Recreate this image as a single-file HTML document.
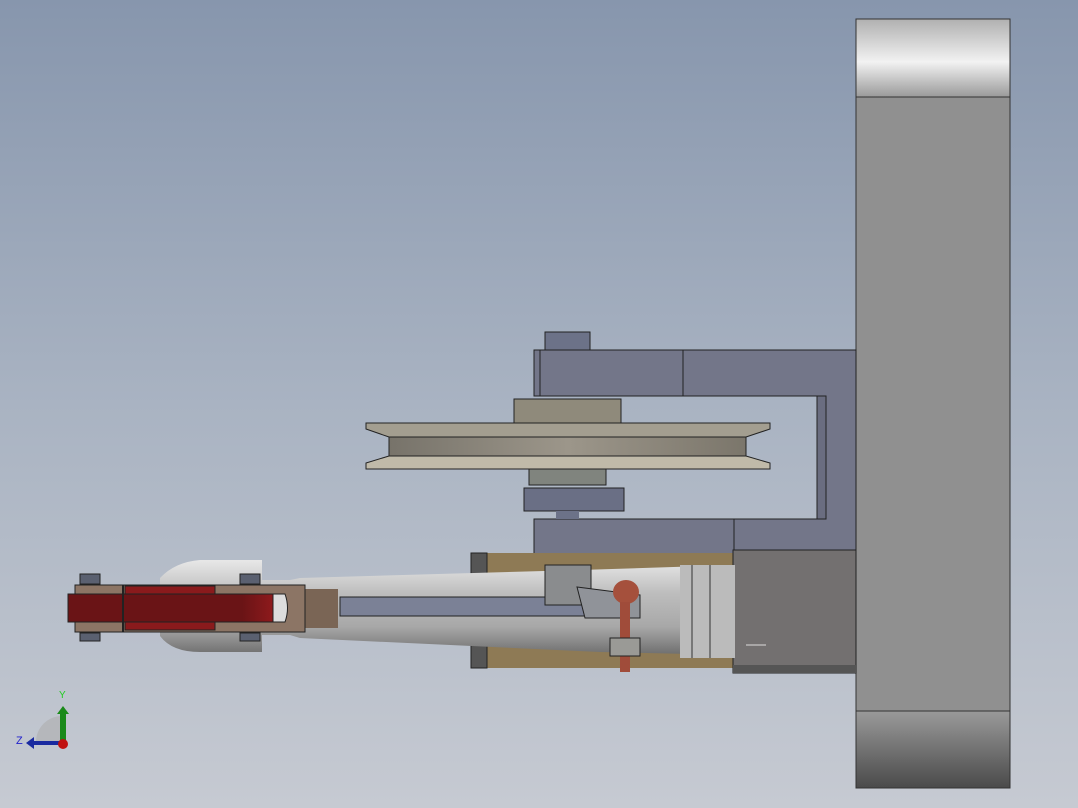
<!DOCTYPE html>
<html><head><style>
html,body{margin:0;padding:0}
body{width:1078px;height:808px;overflow:hidden;background:linear-gradient(#8796ad 0%,#a9b3c2 50%,#c6cad2 100%);font-family:"Liberation Sans",sans-serif}
svg{position:absolute;left:0;top:0}
</style></head><body>
<svg width="1078" height="808" viewBox="0 0 1078 808">
<defs>
<linearGradient id="cap1" x1="0" y1="0" x2="0" y2="1"><stop offset="0" stop-color="#b0b0b0"/><stop offset=".55" stop-color="#f2f2f2"/><stop offset="1" stop-color="#9a9a9a"/></linearGradient>
<linearGradient id="cap2" x1="0" y1="0" x2="0" y2="1"><stop offset="0" stop-color="#9a9a9a"/><stop offset="1" stop-color="#4a4a4a"/></linearGradient>
<linearGradient id="cyl" x1="0" y1="0" x2="0" y2="1"><stop offset="0" stop-color="#e8e8e8"/><stop offset=".35" stop-color="#bdbdbd"/><stop offset=".7" stop-color="#a8a8a8"/><stop offset="1" stop-color="#6e6e6e"/></linearGradient>
<linearGradient id="pul" x1="0" y1="0" x2="1" y2="0"><stop offset="0" stop-color="#77736a"/><stop offset=".5" stop-color="#9c968a"/><stop offset="1" stop-color="#7b766b"/></linearGradient>
<linearGradient id="red" x1="0" y1="0" x2="1" y2="0"><stop offset="0" stop-color="#6a1416"/><stop offset=".85" stop-color="#6a1416"/><stop offset="1" stop-color="#8e1a1c"/></linearGradient>
</defs>
<!-- right column -->
<rect x="856" y="19" width="154" height="78" fill="url(#cap1)" stroke="#333" stroke-width="1"/>
<rect x="856" y="97" width="154" height="614" fill="#909090" stroke="#333"/>
<rect x="856" y="711" width="154" height="77" fill="url(#cap2)" stroke="#333"/>
<!-- bracket -->
<rect x="545" y="332" width="45" height="18" fill="#6c7288" stroke="#222"/>
<path d="M534 350H856V550H534V519H817V396H534Z" fill="#737689" stroke="#222"/>
<rect x="817" y="396" width="9" height="123" fill="#6a6d80" stroke="#222"/>
<line x1="540" y1="350" x2="540" y2="396" stroke="#222"/><line x1="540" y1="519" x2="540" y2="565" stroke="#222"/>
<line x1="683" y1="350" x2="683" y2="396" stroke="#222"/><line x1="683" y1="519" x2="683" y2="565" stroke="#222"/>
<rect x="534" y="519" width="200" height="46" fill="#737689" stroke="#222"/>
<!-- pulley -->
<rect x="514" y="399" width="107" height="24" fill="#8f8a7b" stroke="#222"/>
<polygon points="366,423 770,423 770,429 746,437 389,437 366,429" fill="#a39e90" stroke="#222"/>
<rect x="389" y="437" width="357" height="19" fill="url(#pul)" stroke="#222"/>
<polygon points="366,469 770,469 770,463 746,456 389,456 366,463" fill="#c0baa9" stroke="#222"/>
<rect x="529" y="469" width="77" height="16" fill="#80847e" stroke="#222"/>
<rect x="524" y="488" width="100" height="23" fill="#6a6f85" stroke="#222"/>
<rect x="556" y="511" width="23" height="8" fill="#6c7288"/>
<!-- wood and block -->
<rect x="471" y="553" width="262" height="115" fill="#8e7a55"/>
<rect x="471" y="553" width="16" height="115" fill="#555" stroke="#222"/>
<rect x="733" y="550" width="123" height="123" fill="#737070" stroke="#222"/>
<rect x="733" y="665" width="123" height="8" fill="#555"/>
<line x1="746" y1="645" x2="766" y2="645" stroke="#ddd"/>
<!-- cylinder -->
<path d="M160 578Q175 562 200 560H262V580H290L300 578L580 570L735 565V655L600 652L300 638L290 635H262V652H200Q172 652 160 636Z" fill="url(#cyl)"/>
<rect x="680" y="565" width="55" height="93" fill="#bbb"/>
<line x1="692" y1="565" x2="692" y2="658" stroke="#333"/><line x1="710" y1="565" x2="710" y2="658" stroke="#333"/>
<rect x="340" y="597" width="250" height="19" fill="#7b8196" stroke="#222"/>
<rect x="545" y="565" width="46" height="40" fill="#8a8c8e" stroke="#222"/>
<polygon points="577,587 640,595 640,618 585,618" fill="#909399" stroke="#222"/>
<ellipse cx="626" cy="592" rx="13" ry="12" fill="#a5503c"/>
<rect x="620" y="602" width="10" height="70" fill="#a04c3a"/>
<rect x="610" y="638" width="30" height="18" fill="#9a9a96" stroke="#222"/>
<rect x="305" y="589" width="33" height="39" fill="#7a6555"/>
<!-- red link -->
<rect x="75" y="585" width="230" height="47" fill="#8c7565" stroke="#222"/>
<rect x="68" y="594" width="205" height="28" fill="url(#red)" stroke="#222"/>
<rect x="125" y="586" width="90" height="8" fill="#8a1a1c" stroke="#222"/>
<rect x="125" y="622" width="90" height="8" fill="#8a1a1c" stroke="#222"/>
<line x1="123" y1="585" x2="123" y2="632" stroke="#222" stroke-width="2"/>
<path d="M273 594H285Q290 608 285 622H273Z" fill="#ddd" stroke="#222"/>
<rect x="80" y="574" width="20" height="10" fill="#5a6070" stroke="#222"/>
<rect x="80" y="633" width="20" height="8" fill="#5a6070" stroke="#222"/>
<rect x="240" y="574" width="20" height="10" fill="#5a6070" stroke="#222"/>
<rect x="240" y="633" width="20" height="8" fill="#5a6070" stroke="#222"/>
<!-- triad -->
<path d="M36 742A26 26 0 0 1 62 716V742Z" fill="#b5b7bb"/>
<rect x="60" y="712" width="6" height="28" fill="#1a8a1a"/><polygon points="57,714 63,706 69,714" fill="#1a8a1a"/>
<rect x="34" y="741" width="28" height="4" fill="#1a2aa0"/><polygon points="34,737 26,743 34,749" fill="#1a2aa0"/>
<circle cx="63" cy="744" r="5" fill="#c01010"/>
<text x="59" y="698" font-size="10" fill="#2c2">Y</text>
<text x="16" y="744" font-size="11" fill="#22c">Z</text>
</svg>
</body></html>
